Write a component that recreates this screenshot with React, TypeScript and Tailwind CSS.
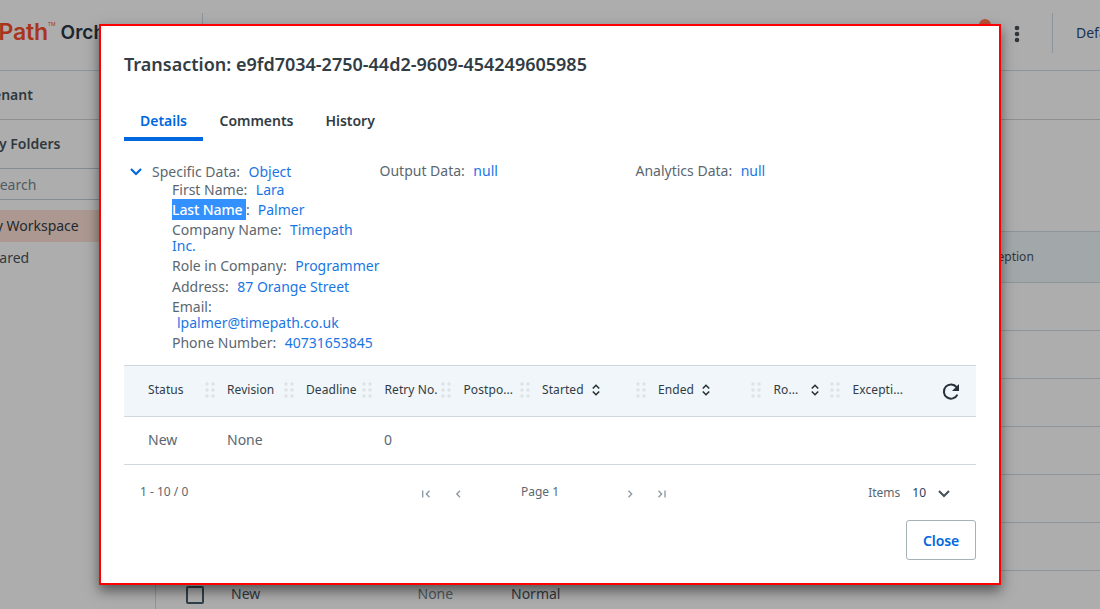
import React from "react";

function Dots() {
  return (
    <svg width="10" height="16" viewBox="0 0 10 16" className="shrink-0" fill="#dde2e5">
      {[2, 8, 14].map((y) => (
        <React.Fragment key={y}>
          <circle cx="2" cy={y} r="1.7" />
          <circle cx="8" cy={y} r="1.7" />
        </React.Fragment>
      ))}
    </svg>
  );
}

function Sort() {
  return (
    <svg width="8" height="12" viewBox="0 0 8 12" className="shrink-0" fill="none" stroke="#273139" strokeWidth="1.6">
      <path d="M0.8 4.5 4 1.3l3.2 3.2M0.8 7.5 4 10.7l3.2-3.2" />
    </svg>
  );
}

function PageIcon({ d }: { d: string }) {
  return (
    <svg width="10" height="8" viewBox="0 0 10 8" fill="none" stroke="#8a97a0" strokeWidth="1.3">
      <path d={d} />
    </svg>
  );
}

function Field({ label, value, className }: { label: string; value: string; className: string }) {
  return (
    <div className={`${className} leading-4`}>
      {label}:<span className="ml-[8.5px] text-[#1976e3]">{value}</span>
    </div>
  );
}

function Column({ label, width, labelWidth, sort, last }: { label: string; width: string; labelWidth?: string; sort?: boolean; last?: boolean }) {
  return (
    <div className={`flex shrink-0 items-center ${width}`}>
      <span className={`whitespace-nowrap tracking-[0.08px] ${labelWidth ?? ""}`}>{label}</span>
      {sort && <span className="ml-2 flex"><Sort /></span>}
      {!last && <span className="ml-auto mr-[12.5px] flex"><Dots /></span>}
    </div>
  );
}

function Background() {
  return (
    <div className="flex h-[609px] w-[1100px] flex-col overflow-hidden bg-[#adadad] text-sm text-[#30383e]">
      <header className="flex h-[71px] shrink-0 items-center border-b border-[#8d959b] pb-1">
        <div className="-ml-[24px] flex w-[226px] shrink-0 items-center whitespace-nowrap font-['Inter']">
          <span className="-mt-[2px] text-[23px] font-semibold tracking-[-0.2px] text-[#a9341b]">UiPath</span>
          <span className="-mt-[17px] text-[5px] text-[#a9341b]">TM</span>
          <span className="ml-[5px] text-[19px] font-semibold text-[#1c262f]">Orchestrator</span>
        </div>
        <div className="h-10 w-px bg-[#8d959b]" />
        <div className="ml-auto mr-[23px] h-[34px] w-3">
          <div className="mt-[3px] h-3 w-3 rounded-full bg-[#bd5037]" />
        </div>
        <svg width="6" height="18" viewBox="0 0 6 18" fill="#30383e" className="mr-[32px] mt-[2px]">
          <circle cx="3" cy="3" r="2.3" /><circle cx="3" cy="9" r="2.3" /><circle cx="3" cy="15" r="2.3" />
        </svg>
        <div className="h-10 w-px bg-[#8d959b]" />
        <div className="ml-[23px] w-6 whitespace-nowrap text-[#193350]">Default</div>
      </header>
      <div className="flex h-[49px] shrink-0 items-center border-b border-[#8d8f91] font-semibold">
        <span className="-ml-[14px]">Tenant</span>
      </div>
      <div className="flex grow">
        <aside className="flex w-[156px] shrink-0 flex-col overflow-hidden border-r border-[#919496] whitespace-nowrap">
          <div className="flex h-12 items-center font-semibold"><span className="-ml-[14px]">My Folders</span></div>
          <div className="flex h-8 items-center border-y border-[#828b91] pt-0.5 text-[#505b62]"><span className="-ml-[8px]">Search</span></div>
          <div className="mt-[10px] flex h-8 items-center bg-[#ac9890] text-[#222a30]"><span className="-ml-[17px]">My Workspace</span></div>
          <div className="flex h-8 items-center"><span className="-ml-[17px]">Shared</span></div>
        </aside>
        <main className="grow">
          <div className="h-[111px]" />
          <div className="flex h-[52px] items-center border-y border-[#8d959b] bg-[#a2a7a9] pl-[823px] text-xs">
            <span>Exception</span>
          </div>
          {[0, 1, 2, 3, 4, 5].map((i) => (
            <div key={i} className="h-12 border-b border-[#8d959b]" />
          ))}
          <div className="flex h-12 items-center">
            <div className="ml-[30px] h-[18px] w-[18px] rounded-[2px] border-2 border-[#30404b]" />
            <span className="-mt-[2px] ml-[27px] w-[186.5px]">New</span>
            <span className="-mt-[2px] w-[93.5px] text-[#51595f]">None</span>
            <span className="-mt-[2px]">Normal</span>
          </div>
        </main>
      </div>
    </div>
  );
}

export default function App() {
  return (
    <div className="relative h-[609px] w-[1100px] overflow-hidden font-['Noto_Sans',sans-serif]">
      <Background />
      <section className="absolute left-[99px] top-[24px] flex h-[561px] w-[902px] flex-col border-2 border-[#ff0000] bg-white px-[23px] text-sm text-[#5b676f] shadow-[0_6px_12px_rgba(0,0,0,0.5)]">
        <h1 className="mt-[26px] h-6 w-[500px] text-lg leading-6 font-semibold text-[#323c44]">Transaction: e9fd7034-2750-44d2-9609-454249605985</h1>
        <nav className="mt-[27px] flex h-[38px] font-semibold leading-9 tracking-[-0.03px] text-[#323c44]">
          <div className="w-[79px] border-b-4 border-[#0067df] text-center text-[#0067df]">Details</div>
          <div className="ml-[16.5px] w-[106px]">Comments</div>
          <div>History</div>
        </nav>
        <div className="mt-[23px] flex h-[201px] shrink-0">
          <div className="w-[255.5px] whitespace-nowrap">
            <div className="flex items-center">
              <svg width="12" height="8" viewBox="0 0 12 8" fill="none" stroke="#0067df" strokeWidth="2.2" className="mx-[6px] mr-[10px]">
                <path d="m1 1 5 5 5-5" />
              </svg>
              <Field label="Specific Data" value="Object" className="" />
            </div>
            <div className="ml-12 w-[210px]">
              <Field label="First Name" value="Lara" className="mt-[2px]" />
              <div className="mt-px flex h-[21px] items-center">
                <span className="h-[21px] w-[74px] bg-[#3390ff] font-medium leading-[21px] tracking-[-0.1px] text-white">Last Name</span>:
                <span className="ml-2 text-[#1976e3]">Palmer</span>
              </div>
              <Field label="Company Name" value="Timepath Inc." className="mt-[2px] w-[200px] whitespace-normal" />
              <Field label="Role in Company" value="Programmer" className="mt-1" />
              <Field label="Address" value="87 Orange Street" className="mt-[5px]" />
              <div className="mt-1 leading-4">Email:<div className="ml-[5px] text-[#1976e3]">lpalmer@timepath.co.uk</div></div>
              <Field label="Phone Number" value="40731653845" className="mt-1" />
            </div>
          </div>
          <Field label="Output Data" value="null" className="-mt-px w-[256px]" />
          <Field label="Analytics Data" value="null" className="-mt-px" />
        </div>
        <div className="flex h-[52px] shrink-0 items-center border-y border-[#cfd8dd] bg-[#f0f6f9] pb-[2px] pl-6 text-xs text-[#323c44]">
          <Column label="Status" width="w-[79px]" />
          <Column label="Revision" width="w-[79px]" />
          <Column label="Deadline" width="w-[78.5px]" />
          <Column label="Retry No." width="w-[79px]" />
          <Column label="Postpo..." width="w-[78.5px]" />
          <Column label="Started" width="w-[116px]" sort />
          <Column label="Ended" width="w-[115.5px]" sort />
          <Column label="Ro..." labelWidth="w-[29px]" width="w-[79px]" sort />
          <Column label="Excepti..." width="w-[89px]" last />
          <svg width="18" height="18" viewBox="0 0 18 18" fill="none" stroke="#273139" strokeWidth="2" className="mt-1">
            <path d="M14.6 4.2A7.1 7.1 0 1 0 15.4 11.6" /><path d="M17 1v7h-7z" fill="#273139" stroke="none" />
          </svg>
        </div>
        <div className="flex h-12 shrink-0 items-center border-b border-[#cfd8dd] pb-[2px] pl-6">
          <span className="w-[79px]">New</span><span className="w-[157px]">None</span><span>0</span>
        </div>
        <div className="flex h-[55px] shrink-0 items-center pl-4 text-xs">
          <span className="-mt-px w-[281px]">1 - 10 / 0</span>
          <div className="mt-[3px] flex w-[100px] gap-[23px]">
            <PageIcon d="M1.7.5v7M8.5.8 5.3 4l3.2 3.2" />
            <PageIcon d="M6 .8 2.8 4 6 7.2" />
          </div>
          <span className="-mt-px w-[104px]">Page 1</span>
          <div className="mt-[3px] flex gap-[22px]">
            <PageIcon d="M3.5 .8 6.7 4 3.5 7.2" />
            <PageIcon d="M1.5.8 4.7 4 1.5 7.2M8 .5v7" />
          </div>
          <span className="ml-auto">Items</span>
          <span className="ml-3 text-[#273f62]">10</span>
          <svg width="12" height="8" viewBox="0 0 12 8" fill="none" stroke="#445058" strokeWidth="2" className="ml-3 mr-[26px] mt-[3px]">
            <path d="m1 1 5 5 5-5" />
          </svg>
        </div>
        <button className="ml-auto h-10 w-[70px] shrink-0 rounded-[3px] border border-[#a4b1b8] pt-[2px] font-semibold tracking-[-0.1px] text-[#0067df]">Close</button>
      </section>
    </div>
  );
}
